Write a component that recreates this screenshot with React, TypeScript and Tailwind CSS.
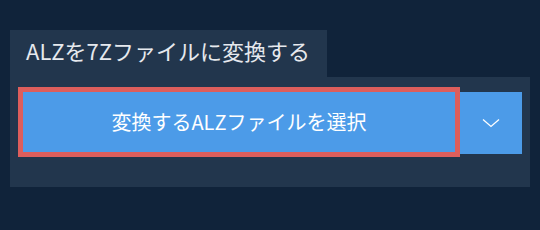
export default function App() {
  return (
    <div
      className="min-h-[230px] bg-[#10233a] px-[10px] pt-[30px]"
      style={{ fontFamily: '"Noto Sans CJK JP", "Noto Sans", sans-serif' }}
    >
      <div className="flex h-[47px] w-[317px] items-center bg-[#22364d] pb-[7px] pl-[16px] text-[22px] text-[#e6e9ee]">
        ALZを7Zファイルに変換する
      </div>
      <div className="flex items-start bg-[#22364d] pb-[30px] pl-[8px] pt-[10px]">
        <button
          type="button"
          className="flex h-[70px] w-[442px] items-center justify-center border-[5px] border-[#dd5e5c] bg-[#4c9be8] text-[20px] text-white"
        >
          変換するALZファイルを選択
        </button>
        <button
          type="button"
          className="mt-[5px] flex h-[62px] w-[62px] items-center justify-center bg-[#4c9be8]"
        >
          <svg width="18" height="10" viewBox="0 0 18 10" fill="none">
            <path d="M1 1.5L9 8.5L17 1.5" stroke="white" strokeWidth="1.3" />
          </svg>
        </button>
      </div>
    </div>
  )
}
